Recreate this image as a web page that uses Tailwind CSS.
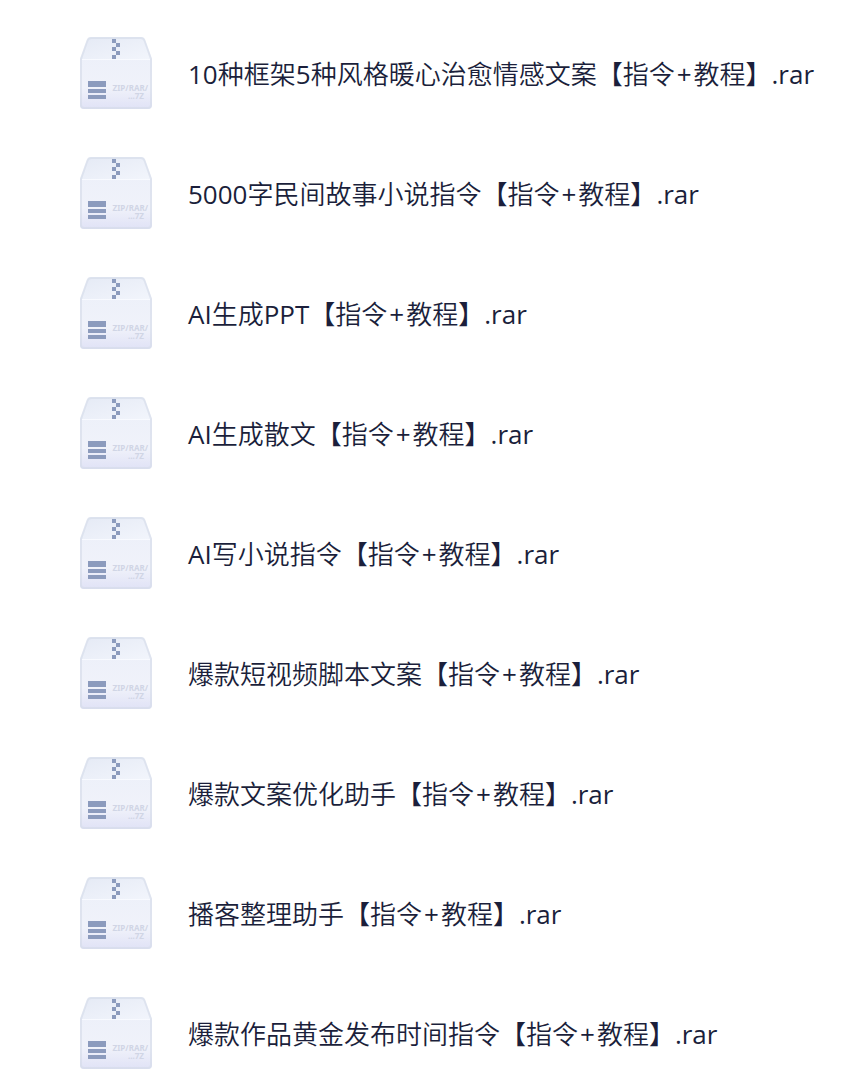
<!DOCTYPE html>
<html lang="zh-CN">
<head>
    <meta charset="UTF-8">
    <meta name="viewport" content="width=device-width, initial-scale=1.0">
    <title>文件列表</title>
    <script src="https://cdn.jsdelivr.net/npm/@tailwindcss/browser@4"></script>
</head>
<body class="bg-white text-[#1b1f3b] font-[350] font-['Open_Sans','Noto_Sans_CJK_SC',sans-serif]">

    <!-- Fills shared by the archive icons -->
    <svg class="absolute size-0" aria-hidden="true">
        <defs>
            <linearGradient id="lidFill" x1="0" y1="0" x2="1" y2="1">
                <stop offset="0" stop-color="#e5eaf5"/>
                <stop offset="1" stop-color="#f2f5fc"/>
            </linearGradient>
            <linearGradient id="boxFill" x1="0" y1="0" x2="0" y2="1">
                <stop offset="0" stop-color="#ebeff9"/>
                <stop offset="0.7" stop-color="#f0f2fa"/>
                <stop offset="1" stop-color="#e0e2f6"/>
            </linearGradient>
        </defs>
    </svg>

    <ul id="fileList" class="flex flex-col gap-12 pt-[37px] pb-2 pl-20"></ul>

    <script>
        const files = [
            "10种框架5种风格暖心治愈情感文案【指令+教程】.rar",
            "5000字民间故事小说指令【指令+教程】.rar",
            "AI生成PPT【指令+教程】.rar",
            "AI生成散文【指令+教程】.rar",
            "AI写小说指令【指令+教程】.rar",
            "爆款短视频脚本文案【指令+教程】.rar",
            "爆款文案优化助手【指令+教程】.rar",
            "播客整理助手【指令+教程】.rar",
            "爆款作品黄金发布时间指令【指令+教程】.rar"
        ];

        const archiveIcon = `
            <svg class="size-18 shrink-0" viewBox="0 0 72 72" aria-hidden="true">
                <path d="M11 0H61Q64 0 65 3L72 22V68Q72 72 68 72H4Q0 72 0 68V22L7 3Q8 0 11 0Z" fill="url(#boxFill)"/>
                <path d="M11 1H61Q63 1 64 3L71 22H1L8 3Q9 1 11 1Z" fill="url(#lidFill)"/>
                <path d="M2 22.5H70" stroke="#f8faff"/>
                <path d="M11 1H61Q63.5 1 64.5 3.5L71 22V68Q71 71 68 71H4Q1 71 1 68V22L7.5 3.5Q8.5 1 11 1Z" fill="none" stroke="#d4dae8" stroke-opacity="0.6" stroke-width="2"/>
                <path d="M32 2h4v4h-4zM36 6h4v4h-4zM32 10h4v4h-4zM36 14h4v4h-4zM32 18h4v4h-4z" fill="#8c9bbd"/>
                <path d="M8 44h18v6H8zM8 52h18v4H8zM8 58h18v4H8z" fill="#8c9bbd"/>
                <text class="font-['Noto_Sans'] font-bold text-[8px]" text-anchor="end" fill="#d0d5e5"><tspan x="68" y="54">ZIP/RAR/</tspan><tspan x="64" y="62">...7Z</tspan></text>
            </svg>`;

        // Latin runs are set a step heavier than the Chinese text
        function formatName(name) {
            return name.split(/([A-Za-z0-9.]+|\+)/).map(part => {
                if (part === "+") return `<span class="font-normal px-0.5">+</span>`;
                if (/^[A-Za-z0-9.]/.test(part)) return `<span class="font-normal">${part}</span>`;
                return part;
            }).join("");
        }

        document.getElementById("fileList").innerHTML = files.map(name => `
            <li>
                <a href="#" class="flex items-center gap-9">
                    ${archiveIcon}
                    <span class="text-[26px] leading-9 pt-0.5 whitespace-nowrap">${formatName(name)}</span>
                </a>
            </li>`).join("");
    </script>

</body>
</html>
